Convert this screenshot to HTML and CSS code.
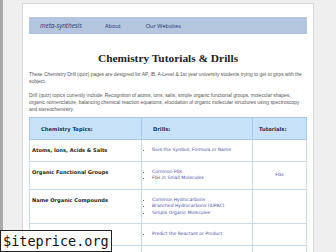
FILE: index.html
```html
<!DOCTYPE html>
<html lang="en">
<head>
    <meta charset="UTF-8">
    <meta name="viewport" content="width=device-width, initial-scale=1.0">
    <title>Chemistry Tutorials &amp; Drills</title>
    <link rel="stylesheet" href="styles.css">
</head>
<body>

<div class="page">
    <div class="nav">
        <a class="brand" href="#">meta-synthesis</a>
        <a href="#">About</a>
        <a href="#">Our Websites</a>
    </div>

    <h1>Chemistry Tutorials &amp; Drills</h1>

    <p>These Chemistry Drill (quiz) pages are designed for AP, IB, A-Level &amp; 1st year university students trying to get to grips with the subject.</p>
    <p class="last">Drill (quiz) topics currently include: Recognition of atoms, ions, salts, simple organic functional groups, molecular shapes, organic nomenclature, balancing chemical reaction equations, elucidation of organic molecular structures using spectroscopy and stereochemistry.</p>

    <table class="drills">
        <tr>
            <th class="topic">Chemistry Topics:</th>
            <th class="drill">Drills:</th>
            <th class="tut">Tutorials:</th>
        </tr>
        <tr>
            <td class="topic">Atoms, Ions, Acids &amp; Salts</td>
            <td class="drill"><ul><li><a href="#">Give the Symbol, Formula or Name</a></li></ul></td>
            <td class="tut"></td>
        </tr>
        <tr>
            <td class="topic">Organic Functional Groups</td>
            <td class="drill"><ul><li><a href="#">Common FGs</a></li><li><a href="#">FGs in Small Molecules</a></li></ul></td>
            <td class="tut"><a href="#">FGs</a></td>
        </tr>
        <tr>
            <td class="topic">Name Organic Compounds</td>
            <td class="drill"><ul><li><a href="#">Common Hydrocarbons</a></li><li><a href="#">Branched Hydrocarbons (IUPAC)</a></li><li><a href="#">Simple Organic Molecules</a></li></ul></td>
            <td class="tut"></td>
        </tr>
        <tr>
            <td class="topic">Chemical Reactions</td>
            <td class="drill"><ul><li><a href="#">Predict the Reactant or Product</a></li></ul></td>
            <td class="tut"></td>
        </tr>
        <tr>
            <td class="topic"></td>
            <td class="drill"></td>
            <td class="tut"></td>
        </tr>
    </table>
</div>

<div class="stamp">$iteprice.org</div>

</body>
</html>
```

FILE: styles.css
```css
html, body { height: 100%; }
body { margin: 0; background: #efefef; border-left: 3px solid #a8a8a8; font-family: "Liberation Sans", Arial, sans-serif; color: #555; overflow: hidden; }

/* Page sheet */
.page { width: 278px; margin: 3px 0 0 19px; padding: 0 6px; min-height: 260px; background: #fff; border: 1px solid #d8d8d8; }

/* Top nav bar */
.nav { margin-top: 13px; height: 17px; background: #b3c6de; display: flex; align-items: center; padding-left: 11px; }
.nav a { color: #23336e; text-decoration: none; font-family: "Open Sans", sans-serif; font-size: 5.6px; margin-right: 25px; }
.nav .brand { font-style: italic; font-size: 6.4px; margin-right: 23px; }

h1 { font-family: "Liberation Serif", "Times New Roman", serif; font-size: 11.4px; color: #222; text-align: center; margin: 18px 0 7px; }

p { font-size: 4.9px; line-height: 7px; margin: 0 0 7px; color: #555; }
p.last { margin-bottom: 4px; }

/* Topics table */
.drills { width: 100%; border-collapse: collapse; table-layout: fixed; margin-top: 0; font-family: "DejaVu Sans", Verdana, sans-serif; }
.drills th, .drills td { border: 1px solid #c9dbe6; vertical-align: top; text-align: left; box-sizing: border-box; }
.drills th { background: #c6e1f8; height: 22px; vertical-align: middle; font-size: 5.2px; color: #1d2d55; border-color: #a9c8e4; }
.drills td { font-size: 4.5px; line-height: 6.5px; padding: 7px 2px 7px; color: #333; }
.drills th.topic { padding-left: 11px; width: 112px; }
.drills th.drill { padding-left: 11px; width: 111px; }
.drills th.tut { padding-left: 6px; }
.drills td.topic { font-weight: bold; font-size: 5.1px; color: #222; }
.drills td.tut { text-align: center; vertical-align: middle; }
.drills ul { margin: 0; padding-left: 8px; }
.drills a { color: #4d4fa6; text-decoration: none; }

/* Watermark */
.stamp { position: absolute; left: 0; bottom: 0; background: #fff; border: 1px solid #222; font-family: "DejaVu Sans Mono", monospace; font-size: 13.5px; line-height: 20px; padding: 0 2px; color: #111; }
```
